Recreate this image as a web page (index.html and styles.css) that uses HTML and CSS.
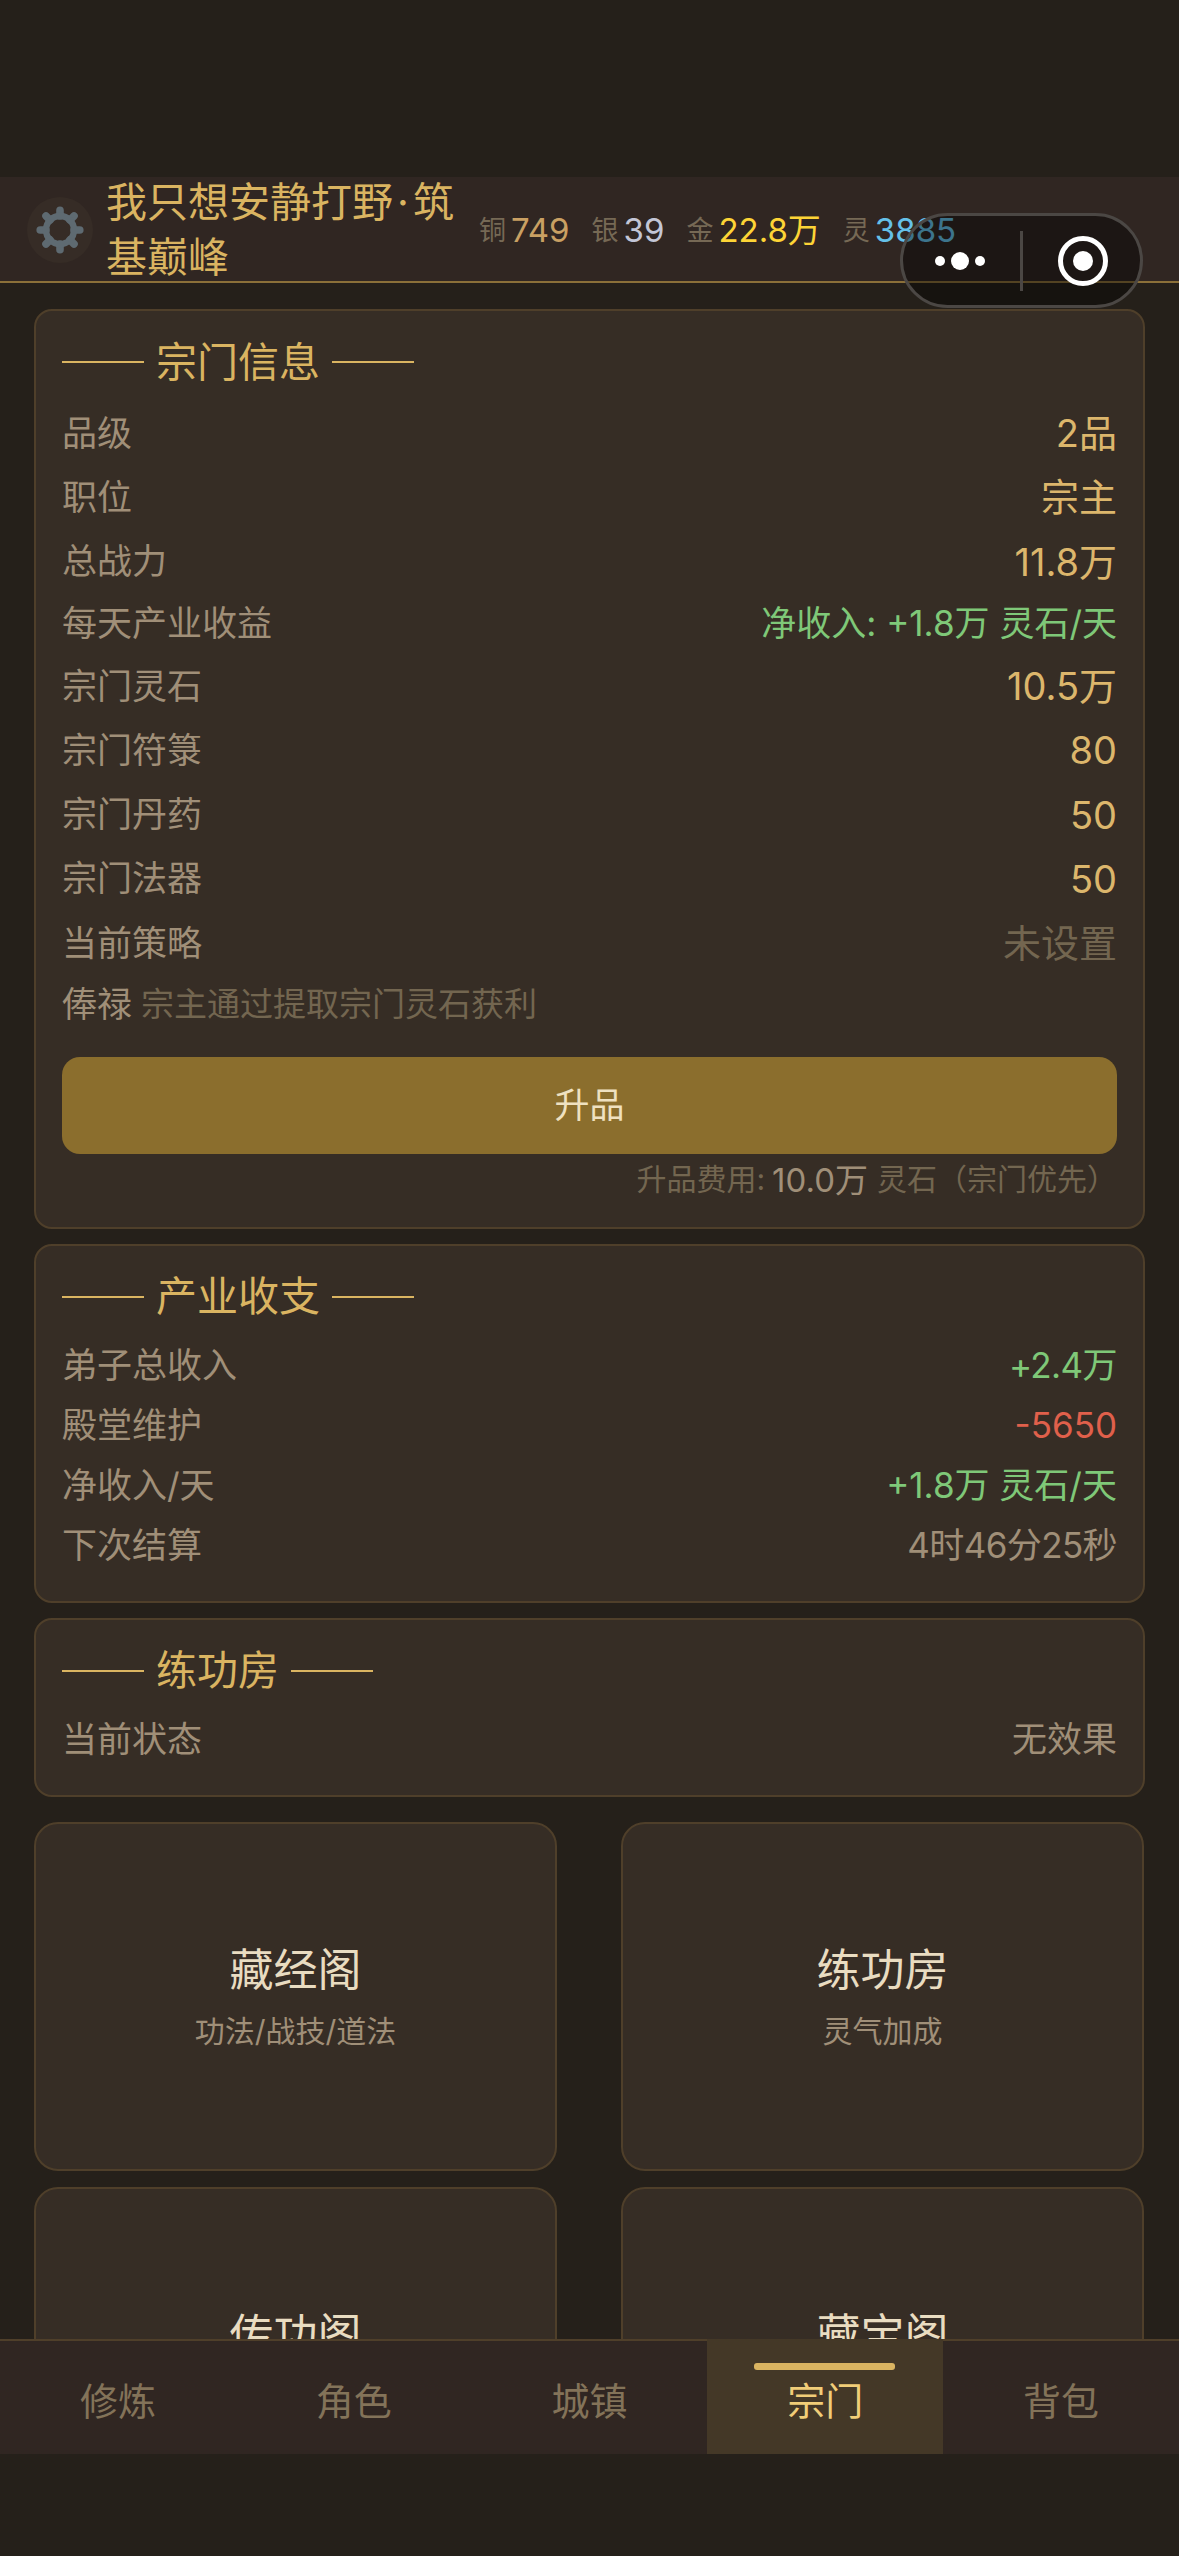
FILE: index.html
```
<!DOCTYPE html>
<html lang="zh-CN">
<head>
<meta charset="utf-8">
<title>宗门</title>
<link rel="stylesheet" href="styles.css">
</head>
<body>
<header class="topbar">
  <div class="settings">
    <svg width="66" height="66" viewBox="-33 -33 66 66">
      <g stroke="#5e6a71" stroke-width="7.6" stroke-linecap="round">
        <path d="M0-14V-19.8M0 14V19.8M-14 0H-19.8M14 0H19.8M-9.9-9.9L-14-14M9.9-9.9L14-14M-9.9 9.9L-14 14M9.9 9.9L14 14"/>
      </g>
      <circle r="14" fill="none" stroke="#5e6a71" stroke-width="6.4"/>
    </svg>
  </div>
  <h1 class="name">我只想安静打野<span class="dot">·</span>筑基巅峰</h1>
  <div class="wallet">
    <div class="coin copper"><span>铜</span><b>749</b></div>
    <div class="coin silver"><span>银</span><b>39</b></div>
    <div class="coin gold"><span>金</span><b>22.8万</b></div>
    <div class="coin spirit"><span>灵</span><b>3885</b></div>
  </div>
  <div class="capsule">
    <svg width="237" height="89" viewBox="0 0 237 89">
      <g fill="#fff">
        <circle cx="37" cy="45" r="5"/><circle cx="57" cy="45" r="9"/><circle cx="77" cy="45" r="5"/>
        <circle cx="180" cy="45" r="10"/>
      </g>
      <rect x="117" y="15" width="3" height="60" fill="#4b4744"/>
      <circle cx="180" cy="45" r="22.5" fill="none" stroke="#fff" stroke-width="5"/>
    </svg>
  </div>
</header>

<main class="content">
  <section class="card">
    <h2 class="title">宗门信息</h2>
    <div class="row tall"><span>品级</span><b>2品</b></div>
    <div class="row tall"><span>职位</span><b>宗主</b></div>
    <div class="row tall"><span>总战力</span><b>11.8万</b></div>
    <div class="row"><span>每天产业收益</span><b class="up">净收入: +1.8万 灵石/天</b></div>
    <div class="row tall"><span>宗门灵石</span><b>10.5万</b></div>
    <div class="row tall"><span>宗门符箓</span><b>80</b></div>
    <div class="row tall"><span>宗门丹药</span><b>50</b></div>
    <div class="row tall"><span>宗门法器</span><b>50</b></div>
    <div class="row tall"><span>当前策略</span><b class="unset">未设置</b></div>
    <div class="row salary"><span>俸禄</span><small>宗主通过提取宗门灵石获利</small></div>
    <button class="upgrade">升品</button>
    <p class="cost"><span>升品费用:</span><b>10.0万</b><span>灵石（宗门优先）</span></p>
  </section>

  <section class="card">
    <h2 class="title">产业收支</h2>
    <div class="row"><span>弟子总收入</span><b class="up tight">+2.4万</b></div>
    <div class="row"><span>殿堂维护</span><b class="down">-5650</b></div>
    <div class="row"><span>净收入/天</span><b class="up">+1.8万 灵石/天</b></div>
    <div class="row"><span>下次结算</span><b class="plain tight">4时46分25秒</b></div>
  </section>

  <section class="card">
    <h2 class="title">练功房</h2>
    <div class="row"><span>当前状态</span><b class="plain">无效果</b></div>
  </section>

  <div class="halls">
    <div class="hall"><h3>藏经阁</h3><p>功法/战技/道法</p></div>
    <div class="hall"><h3>练功房</h3><p>灵气加成</p></div>
    <div class="hall"><h3>传功阁</h3><p></p></div>
    <div class="hall"><h3>藏宝阁</h3><p></p></div>
  </div>
</main>

<nav class="tabs">
  <a class="tab">修炼</a>
  <a class="tab">角色</a>
  <a class="tab">城镇</a>
  <a class="tab active">宗门</a>
  <a class="tab">背包</a>
</nav>
</body>
</html>
```
FILE: styles.css
```
* { box-sizing: border-box; margin: 0; padding: 0; }

body {
  width: 1179px;
  height: 2556px;
  padding: 177px 0 102px;
  display: flex;
  flex-direction: column;
  overflow: hidden;
  background: #25201a;
  color: #a08f78;
  font-family: Inter, "Noto Sans CJK SC", sans-serif;
  font-size: 35px;
  line-height: 1;
}

b, h1, h2, h3 { font-weight: 400; }

.topbar {
  position: relative;
  flex: none;
  height: 106px;
  display: flex;
  align-items: center;
  padding: 2px 0 0 27px;
  background: #302622;
  border-bottom: 2px solid #8b7039;
}
.settings {
  flex: none;
  width: 66px;
  height: 66px;
  border-radius: 50%;
  background: #362c26;
}
.settings svg { display: block; }
.name {
  flex: none;
  width: 360px;
  margin-left: 13px;
  color: #dab461;
  font-size: 41px;
  line-height: 55px;
}
.dot { display: inline-block; width: 20px; text-align: center; }
.wallet { display: flex; gap: 22px; margin-left: 13px; }
.coin { display: flex; align-items: center; gap: 5px; white-space: nowrap; }
.coin span { font-size: 27px; color: #766955; }
.coin b { font-size: 33px; }
.copper b { color: #c9a063; }
.silver b { color: #c3c6d6; }
.gold b { color: #fdd436; }
.spirit b { color: #65c1e9; }

.capsule {
  position: absolute;
  left: 900px;
  top: 36px;
  width: 243px;
  height: 95px;
  border: 3px solid #4b4744;
  border-radius: 48px;
  background: rgba(0, 0, 0, .4);
  z-index: 2;
}
.capsule svg { display: block; }

.content {
  flex: 1;
  min-height: 0;
  overflow: hidden;
  padding: 26px 34px 0;
}
.card {
  padding: 25px 26px 25px;
  margin-bottom: 15px;
  border: 2px solid #4f3f2a;
  border-radius: 18px;
  background: #362d25;
}
.title {
  display: flex;
  align-items: center;
  gap: 12px;
  height: 52px;
  margin-bottom: 13px;
  color: #dab461;
  font-size: 41px;
}
.title::before, .title::after {
  content: "";
  width: 82px;
  height: 2px;
  background: #dab461;
}
.row {
  display: flex;
  align-items: center;
  justify-content: space-between;
  height: 60px;
  white-space: nowrap;
}
.row.tall { height: 64.3px; }
.row.tall b { font-size: 38px; color: #dcb66c; }
.row .up { color: #7fc878; }
.row .down { color: #e0604b; }
.row .plain { color: #a08f78; }
.row .tight { letter-spacing: -.6px; }
.row.tall .unset { color: #736650; }
.row.salary { justify-content: flex-start; gap: 9px; height: 58px; }
.salary small { font-size: 33px; color: #736650; }
.upgrade {
  display: block;
  width: 100%;
  height: 97px;
  margin-top: 23.6px;
  border: 0;
  border-radius: 18px;
  background: #8b6e2d;
  color: #efe1c0;
  font: inherit;
}
.cost {
  display: flex;
  justify-content: flex-end;
  align-items: center;
  height: 48px;
  padding-top: 2px;
  font-size: 30px;
  color: #736650;
}
.cost b { margin: 3px 9px 0 7px; font-size: 33px; color: #a08f78; }

.halls {
  display: grid;
  grid-template-columns: 523px 523px;
  grid-auto-rows: 349px;
  gap: 16px 64px;
  margin-top: 25px;
}
.hall {
  display: flex;
  flex-direction: column;
  align-items: center;
  justify-content: center;
  gap: 24px;
  padding-top: 2px;
  border: 2px solid #4f3f2a;
  border-radius: 24px;
  background: #362d25;
}
.hall h3 { font-size: 44px; color: #e9dcc1; }
.hall p { min-height: 30px; font-size: 30px; }

.tabs {
  flex: none;
  height: 115px;
  display: grid;
  grid-template-columns: repeat(5, 1fr);
}
.tab {
  position: relative;
  display: flex;
  align-items: center;
  justify-content: center;
  padding-top: 7px;
  border-top: 2px solid #4f3f2a;
  background: #302622;
  color: #837359;
  font-size: 38px;
}
.tab.active {
  border-top-color: #443827;
  background: #443827;
  color: #f1cd78;
}
.tab.active::before {
  content: "";
  position: absolute;
  top: 22px;
  left: 19.7%;
  width: 60%;
  height: 7px;
  border-radius: 3px;
  background: #dab461;
}
```
